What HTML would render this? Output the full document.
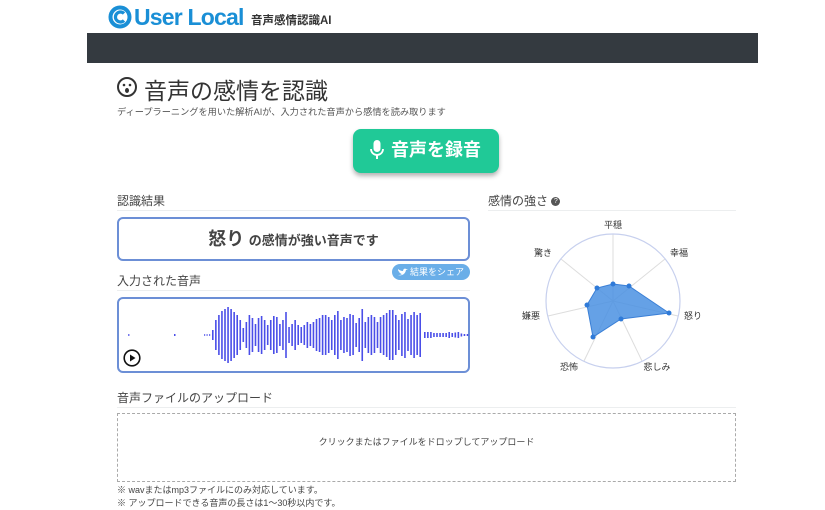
<!DOCTYPE html>
<html><head><meta charset="utf-8"><style>
*{margin:0;padding:0;box-sizing:border-box}
body{width:825px;height:510px;background:#fff;position:relative;overflow:hidden;font-family:"Liberation Sans","Noto Sans CJK JP",sans-serif;color:#333}
.a{position:absolute;white-space:nowrap}
.h{font-size:12px;color:#444}
.line{position:absolute;height:1px;background:#eceeef}
</style></head><body>
<svg class="a" style="left:108px;top:5px" width="24" height="24" viewBox="0 0 24 24"><circle cx="12" cy="12" r="9.5" fill="none" stroke="#1a8fd6" stroke-width="4"/><path d="M16 8.5 A5 5 0 1 0 16 15.5" fill="none" stroke="#1a8fd6" stroke-width="3.2"/></svg>
<div class="a" style="left:134px;top:4px;font-size:23px;font-weight:bold;color:#1a8fd6;letter-spacing:-0.8px">User Local</div>
<div class="a" style="left:251px;top:12px;font-size:11.5px;font-weight:bold;color:#333">音声感情認識AI</div>
<div class="a" style="left:87px;top:33px;width:671px;height:30px;background:#343a40"></div>
<svg class="a" style="left:116px;top:76px" width="22" height="22" viewBox="0 0 22 22"><circle cx="11" cy="11" r="9" fill="none" stroke="#333" stroke-width="2"/><circle cx="8" cy="9" r="1.3" fill="#333"/><circle cx="14" cy="9" r="1.3" fill="#333"/><ellipse cx="11" cy="14.5" rx="2" ry="2.5" fill="#333"/></svg>
<div class="a" style="left:144px;top:72px;font-size:23px;color:#333">音声の感情を認識</div>
<div class="a" style="left:117px;top:104px;font-size:9.2px;color:#555">ディープラーニングを用いた解析AIが、入力された音声から感情を読み取ります</div>
<div class="a" style="left:353px;top:129px;width:146px;height:44px;background:#20c997;border-radius:8px;box-shadow:0 3px 5px rgba(0,0,0,.3);color:#fff;font-size:18px;font-weight:bold;line-height:43px;padding-left:38px">音声を録音</div>
<svg class="a" style="left:370px;top:139px" width="14" height="22" viewBox="0 0 14 22"><rect x="3.5" y="1" width="7" height="12" rx="3.5" fill="#fff"/><path d="M1 10a6 6 0 0 0 12 0" fill="none" stroke="#fff" stroke-width="1.8"/><path d="M7 16v4" stroke="#fff" stroke-width="2"/></svg>
<div class="a h" style="left:117px;top:192px">認識結果</div>
<div class="line" style="left:117px;top:210px;width:353px"></div>
<div class="a" style="left:117px;top:217px;width:353px;height:44px;border:2px solid #6c8fd6;border-radius:6px;text-align:center;line-height:40px;font-weight:bold;color:#444"><span style="font-size:18px">怒り</span> <span style="font-size:13px">の感情が強い音声です</span></div>
<div class="a" style="left:392px;top:264px;width:78px;height:16px;background:#6aaee8;border-radius:8px;color:#fff;font-size:9px;line-height:16px;padding-left:18px">結果をシェア</div>
<svg class="a" style="left:398px;top:268px" width="10" height="8" viewBox="0 0 10 8"><path d="M0 7c3 1 7 0 8-5l2-1-2 0C7 0 5 1 5 3 3 3 1 2 0 1c0 2 1 3 2 3H1c1 1 2 2 3 2-1 1-3 1-4 1z" fill="#fff"/></svg>
<div class="a h" style="left:117px;top:272px">入力された音声</div>
<div class="line" style="left:117px;top:290px;width:353px"></div>
<div class="a" style="left:117px;top:297px;width:353px;height:76px;border:2px solid #6c8fd6;border-radius:6px"></div>
<svg class="a" style="left:117px;top:297px" width="353" height="76" id="wv"></svg>
<svg class="a" style="left:123px;top:349px" width="18" height="18" viewBox="0 0 18 18"><circle cx="9" cy="9" r="7.8" fill="#fff" stroke="#111" stroke-width="1.6"/><path d="M7 5.5v7l5.5-3.5z" fill="#111"/></svg>
<div class="a h" style="left:488px;top:192px">感情の強さ <span style="display:inline-block;width:9px;height:9px;border-radius:50%;background:#555;color:#fff;font-size:7px;text-align:center;line-height:9px;vertical-align:middle">?</span></div>
<div class="line" style="left:488px;top:210px;width:248px"></div>
<svg class="a" style="left:480px;top:210px" width="270" height="170" viewBox="480 210 270 170">
<g stroke="#ddd" stroke-width="1">
<line x1="613" y1="301" x2="613" y2="234"/><line x1="613" y1="301" x2="665" y2="259"/><line x1="613" y1="301" x2="678" y2="316"/><line x1="613" y1="301" x2="642" y2="361"/><line x1="613" y1="301" x2="584" y2="361"/><line x1="613" y1="301" x2="548" y2="316"/><line x1="613" y1="301" x2="561" y2="259"/></g>
<circle cx="613" cy="301" r="67" fill="none" stroke="#c7d0ee" stroke-width="1.2"/>
<polygon points="613,284 629,286 669,313 621,319 593,337 587,305 597,288" fill="#4a90e2" fill-opacity=".85" stroke="#3a7fd6" stroke-width="1"/>
<g fill="#2f7ad8"><circle cx="613" cy="284" r="2.5"/><circle cx="629" cy="286" r="2.5"/><circle cx="669" cy="313" r="2.5"/><circle cx="621" cy="319" r="2.5"/><circle cx="593" cy="337" r="2.5"/><circle cx="587" cy="305" r="2.5"/><circle cx="597" cy="288" r="2.5"/></g>
<g font-size="9" fill="#333" text-anchor="middle" font-family="Liberation Sans,Noto Sans CJK JP,sans-serif">
<text x="613" y="228">平穏</text><text x="679" y="256">幸福</text><text x="693" y="319">怒り</text><text x="657" y="370">悲しみ</text><text x="569" y="370">恐怖</text><text x="531" y="319">嫌悪</text><text x="543" y="256">驚き</text></g>
</svg>
<div class="a h" style="left:117px;top:389px">音声ファイルのアップロード</div>
<div class="line" style="left:117px;top:407px;width:619px"></div>
<div class="a" style="left:117px;top:413px;width:619px;height:69px;border:1px dashed #aaa;text-align:center;line-height:57px;font-size:9px;color:#444">クリックまたはファイルをドロップしてアップロード</div>
<div class="a" style="left:117px;top:483px;font-size:9px;color:#444">※ wavまたはmp3ファイルにのみ対応しています。</div>
<div class="a" style="left:117px;top:496px;font-size:9px;color:#444">※ アップロードできる音声の長さは1〜30秒以内です。</div>
<script>
var s='',c=38,hs=[10,30,40,48,52,56,52,46,40,30,14,26,40,34,22,34,38,30,20,30,38,36,22,30,46,16,22,30,20,16,20,26,22,26,32,34,40,40,36,30,40,48,30,36,34,42,40,24,34,52,26,36,40,36,26,36,40,44,50,50,40,30,42,46,32,40,46,40,44];
function b(x,h,w){s+='<rect x="'+x+'" y="'+(c-h/2)+'" width="'+(w||1.6)+'" height="'+h+'" fill="#4a4ee8"/>';}
b(11,1.5,1.5);b(57,2,1.5);b(87,1.5,1.2);b(89.5,1.5,1.2);b(92,1.5,1.2);
for(var i=0;i<hs.length;i++)b(95+i*3.05,hs[i]);
var sm=[6,6,6,4,4,4,4,4,6,4,5,6,3,2,2];
for(var j=0;j<sm.length;j++)b(307+j*3.05,sm[j]);
document.getElementById('wv').innerHTML=s;
</script>
</body></html>
